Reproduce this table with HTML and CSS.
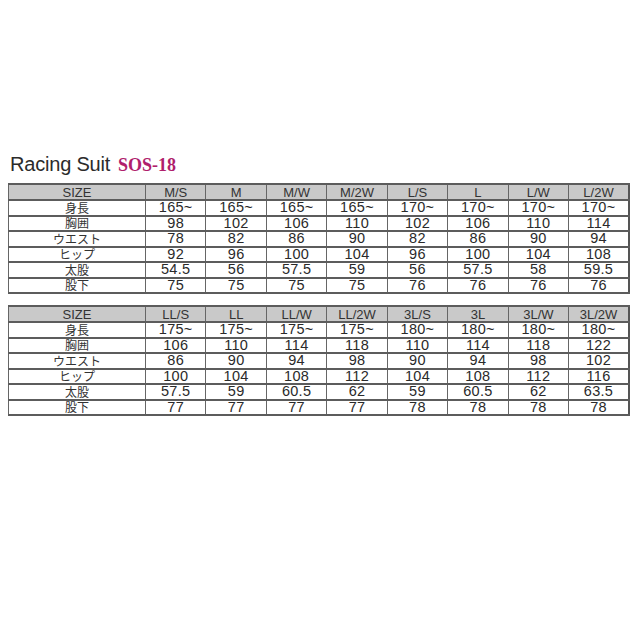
FILE: index.html
```html
<!DOCTYPE html>
<html lang="ja">
<head>
<meta charset="utf-8">
<link rel="stylesheet" href="styles.css">
</head>
<body>
<div class="page">
  <h1 class="title"><span class="name">Racing Suit</span><span class="code">SOS-18</span></h1>
  <table class="sizes">
    <colgroup><col class="c-label"><col><col><col><col><col><col><col><col></colgroup>
    <tr class="head"><th>SIZE</th><th>M/S</th><th>M</th><th>M/W</th><th>M/2W</th><th>L/S</th><th>L</th><th>L/W</th><th>L/2W</th></tr>
    <tr><th>身長</th><td>165~</td><td>165~</td><td>165~</td><td>165~</td><td>170~</td><td>170~</td><td>170~</td><td>170~</td></tr>
    <tr><th>胸囲</th><td>98</td><td>102</td><td>106</td><td>110</td><td>102</td><td>106</td><td>110</td><td>114</td></tr>
    <tr><th>ウエスト</th><td>78</td><td>82</td><td>86</td><td>90</td><td>82</td><td>86</td><td>90</td><td>94</td></tr>
    <tr><th>ヒップ</th><td>92</td><td>96</td><td>100</td><td>104</td><td>96</td><td>100</td><td>104</td><td>108</td></tr>
    <tr><th>太股</th><td>54.5</td><td>56</td><td>57.5</td><td>59</td><td>56</td><td>57.5</td><td>58</td><td>59.5</td></tr>
    <tr><th>股下</th><td>75</td><td>75</td><td>75</td><td>75</td><td>76</td><td>76</td><td>76</td><td>76</td></tr>
  </table>
  <table class="sizes second">
    <colgroup><col class="c-label"><col><col><col><col><col><col><col><col></colgroup>
    <tr class="head"><th>SIZE</th><th>LL/S</th><th>LL</th><th>LL/W</th><th>LL/2W</th><th>3L/S</th><th>3L</th><th>3L/W</th><th>3L/2W</th></tr>
    <tr><th>身長</th><td>175~</td><td>175~</td><td>175~</td><td>175~</td><td>180~</td><td>180~</td><td>180~</td><td>180~</td></tr>
    <tr><th>胸囲</th><td>106</td><td>110</td><td>114</td><td>118</td><td>110</td><td>114</td><td>118</td><td>122</td></tr>
    <tr><th>ウエスト</th><td>86</td><td>90</td><td>94</td><td>98</td><td>90</td><td>94</td><td>98</td><td>102</td></tr>
    <tr><th>ヒップ</th><td>100</td><td>104</td><td>108</td><td>112</td><td>104</td><td>108</td><td>112</td><td>116</td></tr>
    <tr><th>太股</th><td>57.5</td><td>59</td><td>60.5</td><td>62</td><td>59</td><td>60.5</td><td>62</td><td>63.5</td></tr>
    <tr><th>股下</th><td>77</td><td>77</td><td>77</td><td>77</td><td>78</td><td>78</td><td>78</td><td>78</td></tr>
  </table>
</div>
</body>
</html>
```
FILE: styles.css
```css
html, body {
  margin: 0;
  padding: 0;
  background: #ffffff;
}
.page {
  padding: 152px 10px 0 8px;
  font-family: "Liberation Sans", Arial, "Noto Sans CJK JP", sans-serif;
  color: #2a2a2a;
}
.title {
  margin: 0 0 7px 2px;
  height: 24px;
  line-height: 24px;
  font-weight: normal;
  display: flex;
  align-items: baseline;
  gap: 8px;
}
.name {
  font-size: 20px;
  color: #2b2b2b;
  letter-spacing: -0.2px;
}
.code {
  font-family: "Liberation Serif", "Times New Roman", serif;
  font-weight: bold;
  font-size: 18px;
  color: #b01e6c;
}
.sizes {
  width: 622px;
  table-layout: fixed;
  border-collapse: collapse;
  border-right: 2px solid #555;
  border-left: 1px solid #777;
}
.sizes.second {
  margin-top: 11px;
}
.c-label {
  width: 137px;
}
.sizes th, .sizes td {
  height: 13.5px;
  padding: 0;
  text-align: center;
  vertical-align: middle;
  font-weight: normal;
  font-size: 14.5px;
  line-height: 13px;
  border-top: 2px solid #5c5c5c;
  border-left: 1px solid #666;
  color: #2a2a2a;
}
.sizes tr > th:first-child {
  font-family: "Noto Sans CJK JP", "Liberation Sans", sans-serif;
  font-size: 12px;
  line-height: 12px;
  color: #333;
}
.sizes tr:last-child th, .sizes tr:last-child td {
  border-bottom: 2px solid #5c5c5c;
}
.sizes .head th {
  background: #c9c9c9;
  font-size: 13px;
  height: 14px;
  font-family: "Liberation Sans", Arial, sans-serif;
  color: #333;
}
.sizes .head th:first-child {
  font-family: "Liberation Sans", Arial, sans-serif;
  font-size: 13px;
  line-height: 13px;
}
.sizes td {
  letter-spacing: 0.3px;
}
```
